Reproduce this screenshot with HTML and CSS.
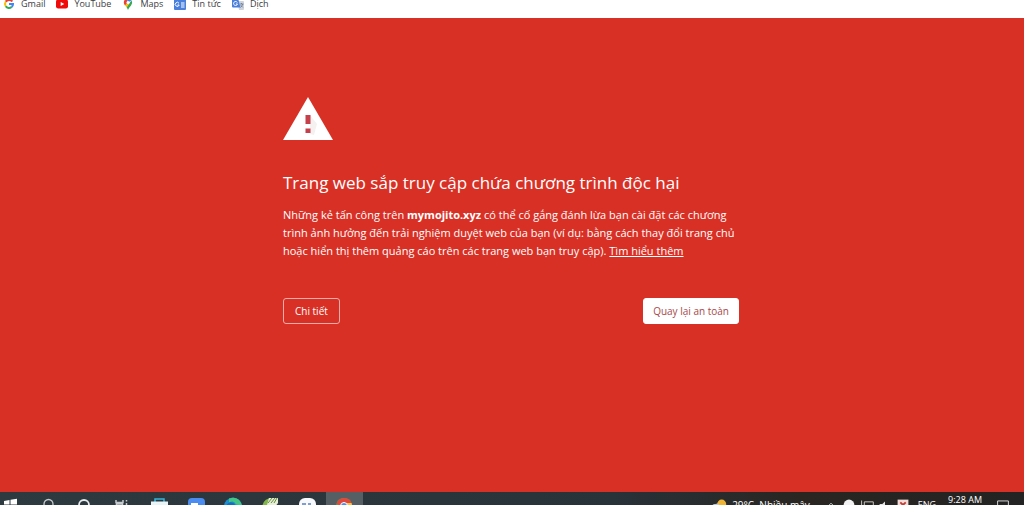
FILE: index.html
```html
<!DOCTYPE html>
<html lang="vi">
  <head>
    <meta charset="utf-8" />
    <meta name="viewport" content="width=device-width, initial-scale=1" />
    <title>Lỗi bảo mật</title>
    <link rel="stylesheet" href="styles.css">
  </head>
  <body>
    <!-- bookmarks bar, scrolled half out of the top -->
    <nav class="bookmarks">
        <a href="#">
            <svg viewBox="0 0 12 12"><g fill="none" stroke-width="2"><path d="M9.3 3.500A4 4 0 0 0 2.700 3.800" stroke="#ea4335"/><path d="M2.700 3.800A4 4 0 0 0 2.700 8.200" stroke="#fbbc05"/><path d="M2.700 8.200A4 4 0 0 0 8.600 9" stroke="#34a853"/><path d="M8.600 9A4 4 0 0 0 10 6.100H6" stroke="#4285f4"/></g></svg>
            Gmail
        </a>
        <a href="#">
            <svg viewBox="0 0 12 12"><rect y="1.5" width="12" height="9" rx="2.2" fill="#f00b0b"/><path d="M4.7 4v4l3.6-2z" fill="#fff"/></svg>
            YouTube
        </a>
        <a href="#">
            <svg viewBox="0 0 12 12"><path d="M1.8 4.6A4.2 4.2 0 0 1 4.6.6L6 4.4 3 7.4Q1.8 6 1.8 4.6z" fill="#ea4335"/><path d="M4.6.6a4.2 4.2 0 0 1 5 1.7L6 4.4z" fill="#4285f4"/><path d="M9.6 2.3Q11 5 9 7.4 7 9.5 6 12 5.400 10.500 4.600 9.300L7.500 5z" fill="#34a853"/><path d="M3 7.400l2.800-3 1.800 1-3 3.900z" fill="#fbbc05"/><circle cx="6" cy="4.400" r="1.500" fill="#fff"/></svg>
            Maps
        </a>
        <a href="#">
            <svg viewBox="0 0 12 12"><rect y="1" width="12" height="11" rx="1" fill="#4a80dc"/><path d="M5 5.300a2 2 0 1 0 .2 1.700H3.500M7 5h3.500M7 7h3.500M7 9h3.500" fill="none" stroke="#fff"/></svg>
            Tin tức
        </a>
        <a href="#">
            <svg viewBox="0 0 12 12"><path d="M5 3h6a1 1 0 0 1 1 1v7a1 1 0 0 1-1 1H7z" fill="#cfd4dc"/><path d="M0 0h6l2.500 9.500H1a1 1 0 0 1-1-1z" fill="#4a80dc"/><path d="M5.300 4.500a2 2 0 1 0 .2 1.500H3.800" fill="none" stroke="#fff"/><path d="M8 6h3.500M9.500 5v1M10.800 6Q10 8.500 8.500 9.500M8.600 7.200l2.200 2.200" fill="none" stroke="#6a7890" stroke-width=".8"/></svg>
            Dịch
        </a>
    </nav>

    <main class="warning">
        <div class="interstitial">
            <svg class="icon" viewBox="0 0 50 43"><path d="M25 0L50 43H0z" fill="#fff"/><path d="M27 18l7 9-3 11-4-1z" fill="#f6f1f1"/><path d="M22.500 18h5v9h-5zM22.500 31.500h5v4.500h-5z" fill="#c5404a"/></svg>
            <h1>Trang web sắp truy cập chứa chương trình độc hại</h1>
            <p>
                Những kẻ tấn công trên <strong>mymojito.xyz</strong> có thể cố gắng đánh lừa bạn cài đặt các chương<br />
                trình ảnh hưởng đến trải nghiệm duyệt web của bạn (ví dụ: bằng cách thay đổi trang chủ<br />
                hoặc hiển thị thêm quảng cáo trên các trang web bạn truy cập). <a href="#">Tìm hiểu thêm</a>
            </p>
            <div class="buttons">
                <button type="button" class="details">Chi tiết</button>
                <button type="button" class="safe">Quay lại an toàn</button>
            </div>
        </div>
    </main>

    <!-- only the top edge of the taskbar is on screen -->
    <footer class="taskbar">
        <div class="apps">
            <button type="button" class="start" aria-label="Start"><svg viewBox="0 0 20 20"><path d="M4 7l5.500-1v4.500H4zM10.500 5.800l6.500-1v5.700h-6.500zM4 11.500h5.500V16L4 15zM10.500 11.500H17V17l-6.500-1z" fill="#fff"/></svg></button>
            <button type="button" aria-label="Search"><svg viewBox="0 0 20 20"><path d="M15 10a4.500 4.500 0 1 0-9 0 4.500 4.500 0 0 0 9 0zM7 14l-4 4" fill="none" stroke="#c5cbce" stroke-width="1.300"/></svg></button>
            <button type="button" aria-label="Cortana"><svg viewBox="0 0 20 20"><circle cx="9" cy="11" r="5" fill="none" stroke="#e8ecee" stroke-width="1.800"/></svg></button>
            <button type="button" aria-label="Task view"><svg viewBox="0 0 20 20"><path d="M4 6v2.500h7V6M4.500 10h6v5h-6zM14.500 6v1.500M14.500 9v7" fill="none" stroke="#c5cbce" stroke-width="1.500"/></svg></button>
            <button type="button" aria-label="Store"><svg viewBox="0 0 20 20"><path d="M6 8V5h9v3" fill="none" stroke="#35b5dc" stroke-width="1.500"/><path d="M2 7.500h17V18H2z" fill="#e9f4f7"/></svg></button>
            <button type="button" aria-label="Zoom"><svg viewBox="0 0 20 20"><rect x="2" y="4" width="17" height="16" rx="4" fill="#4a8cf0"/><path d="M5 9h7v6H5z" fill="#fff"/></svg></button>
            <button type="button" aria-label="Edge"><svg viewBox="0 0 20 20"><circle cx="10" cy="12.500" r="9" fill="#1d8ed4"/><path d="M6 4.500q10-3 13 7l-6-1q-2-5-7-2z" fill="#43c584"/><path d="M3 11.500q4-6 9-1l-5 8z" fill="#126fb8"/></svg></button>
            <button type="button" aria-label="CorelDRAW"><svg viewBox="0 0 20 20"><path d="M2 14Q3 4 12 4l-4 15z" fill="#83b54b"/><path d="M9 4h9v5l-7 9H5z" fill="#e7efd8"/><path d="M8 9l4-5M11 9l4-5M14 9l3-5" stroke="#668e38"/></svg></button>
            <button type="button" aria-label="Zalo"><svg viewBox="0 0 20 20"><rect x="2" y="4" width="17" height="16" rx="6" fill="#f7f9fc"/><path d="M5 10h4M11 10h3" stroke="#5b7fc0" stroke-width="1.500"/></svg></button>
            <button type="button" aria-label="Chrome" class="active"><svg viewBox="0 0 20 20"><circle cx="10" cy="12" r="8" fill="#43a857"/><path d="M2.500 10a8 8 0 0 1 15.500 0l-8 3z" fill="#e5463a"/><path d="M12 9h5.500a8 8 0 0 1-7 11z" fill="#f5c33c"/><circle cx="10" cy="12" r="3.500" fill="#4a8cf0" stroke="#fff"/></svg></button>
        </div>
        <div class="tray">
            <svg viewBox="0 0 20 20"><circle cx="13" cy="9" r="5" fill="#f0b435"/><path d="M2 15a4 4 0 0 1 4-6q4-2 5 3t-1 4z" fill="#b9cbd8"/></svg>
            <span class="weather">29°C&nbsp; Nhiều mây</span>
            <svg viewBox="0 0 20 20"><path d="M6 12l4-4 4 4" fill="none" stroke="#ddd"/></svg>
            <svg viewBox="0 0 20 20"><circle cx="10" cy="10" r="6" fill="#f2f2f2"/></svg>
            <svg viewBox="0 0 20 20"><path d="M4 5v10M7 6.500h10v7H7z" fill="none" stroke="#d8d4ce"/></svg>
            <svg viewBox="0 0 20 20"><path d="M4 9h3l3-3v11l-3-4H4z" fill="#e4e4e4"/></svg>
            <svg viewBox="0 0 20 20"><path d="M4 4h12v13H4z" fill="#f3dcd8"/><path d="M7 7l3 3 3-3" fill="none" stroke="#c23a34" stroke-width="2"/></svg>
            <span class="lang">ENG</span>
            <time>9:28 AM</time>
            <svg viewBox="0 0 20 20"><path d="M4 5.500h12v8h-4l-2 2v-2H4z" fill="none" stroke="#e4e4e4"/></svg>
        </div>
    </footer>
  </body>
</html>
```
FILE: styles.css
```css
* {
    box-sizing: border-box;
}

body {
    margin: 0;
    height: 100vh;
    display: flex;
    flex-direction: column;
    overflow: hidden;
    font-family: "Open Sans", "Noto Sans", sans-serif;
    color: white;
    background-color: #d93025;
}

/* bookmarks */
.bookmarks {
    display: flex;
    align-items: flex-end;
    gap: 11px;
    height: 18px;
    padding: 0 3px 7px;
    background-color: white;
}

.bookmarks a {
    display: flex;
    align-items: center;
    gap: 6px;
    font-size: 9px;
    line-height: 14px;
    color: #3c4043;
    text-decoration: none;
}

.bookmarks svg {
    width: 12px;
    height: 12px;
}

/* red page */
.warning {
    flex: 1;
    padding: 79px 26px 0 24px;
}

.interstitial {
    max-width: 456px;
    margin: 0 auto;
}

.icon {
    display: block;
    width: 50px;
    height: 43px;
}

h1 {
    margin: 30px 0 10px;
    font-size: 17px;
    font-weight: normal;
    line-height: 26px;
}

p {
    margin: 0;
    font-size: 11px;
    line-height: 18px;
}

p a {
    color: white;
}

.buttons {
    display: flex;
    justify-content: space-between;
    margin-top: 38px;
}

.buttons button {
    height: 26px;
    padding: 0 11px;
    border: 1px solid #f0aca7;
    border-radius: 3px;
    font-family: inherit;
    font-size: 10px;
    color: white;
    background-color: transparent;
    cursor: pointer;
}

.buttons .safe {
    padding: 0 9px;
    border-color: white;
    color: #a8484a;
    background-color: white;
}

/* taskbar */
.taskbar {
    display: flex;
    justify-content: space-between;
    height: 13px;
    overflow: hidden;
    background: linear-gradient(to right, #2d3a40, #283239 60%, #292622 78%, #232323);
}

.apps,
.tray {
    display: flex;
    height: 32px;
}

.apps button {
    display: flex;
    width: 37px;
    height: 32px;
    padding: 2px 8px;
    border: 0;
    background-color: transparent;
}

.apps .start {
    width: 30px;
    padding-left: 0;
}

.apps .active {
    background-color: #566064;
}

.apps svg {
    width: 20px;
    height: 20px;
}

.tray {
    align-items: flex-start;
    padding-right: 12px;
    font-size: 9px;
}

.tray svg {
    width: 18px;
    height: 18px;
    margin-top: 4px;
}

.weather {
    margin: 6px 12px 0 4px;
    font-size: 10px;
    line-height: 14px;
}

.lang {
    margin: 6px 0 0 6px;
    line-height: 14px;
}

time {
    margin: 1px 12px 0;
    line-height: 14px;
}
```
